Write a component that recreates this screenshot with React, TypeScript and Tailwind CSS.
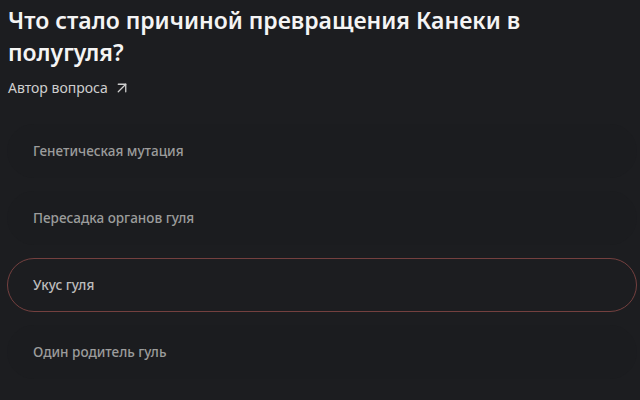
import { ArrowUpRight } from 'lucide-react';

const options = [
  { id: 1, label: 'Генетическая мутация' },
  { id: 2, label: 'Пересадка органов гуля' },
  { id: 3, label: 'Укус гуля', selected: true },
  { id: 4, label: 'Один родитель гуль' },
];

export default function App() {
  return (
    <div className="min-h-[400px] w-[640px] bg-[#1c1d20] font-['Noto_Sans',sans-serif] text-white">
      <div className="px-2 pt-[4px]">
        <h1 className="max-w-[540px] text-[23px] font-semibold leading-[32px] text-[#f4f4f4]">
          Что стало причиной превращения Канеки в полугуля?
        </h1>
        <a className="mt-[10px] flex h-[20px] items-center gap-[5px] text-[14px] leading-[20px] text-[#cfcfcf]">
          Автор вопроса
          <ArrowUpRight className="h-[18px] w-[18px]" strokeWidth={1.7} />
        </a>
      </div>

      <ul className="mt-[26px] flex flex-col gap-[13px] pl-[7px] pr-[3px]">
        {options.map((option) => (
          <li
            key={option.id}
            className={`flex h-[54px] items-center rounded-full border px-[25px] text-[13.5px] font-medium ${
              option.selected
                ? 'border-[#74403f] text-[#bcbcbc]'
                : 'border-transparent bg-[#1b1c1f] text-[#9c9c9c]'
            }`}
          >
            {option.label}
          </li>
        ))}
      </ul>
    </div>
  );
}
